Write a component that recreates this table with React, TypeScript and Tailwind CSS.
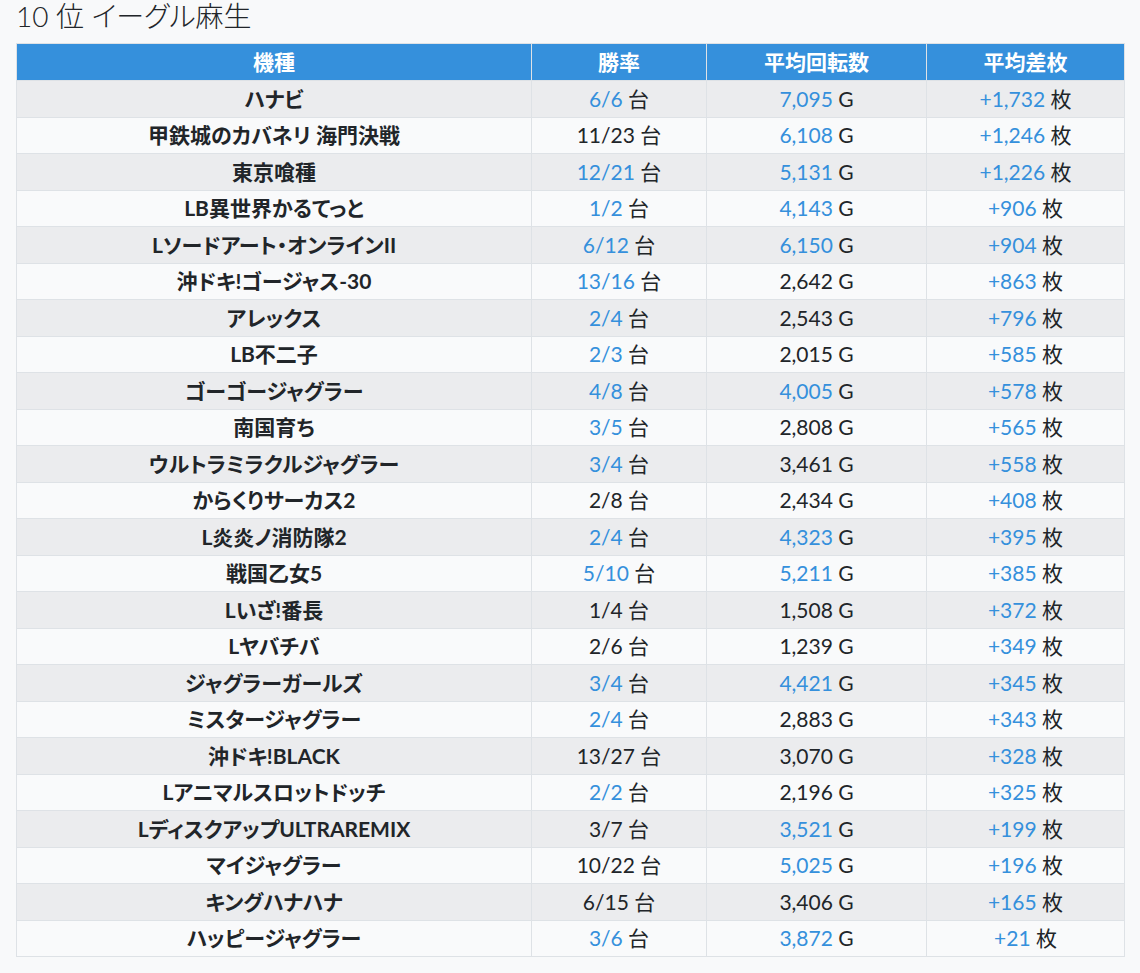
import React from "react";

type Row = { name: string; rate: string; rb: boolean; g: string; gb: boolean; d: string };

const rows: Row[] = [
  { name: "ハナビ", rate: "6/6", rb: true, g: "7,095", gb: true, d: "+1,732" },
  { name: "甲鉄城のカバネリ 海門決戦", rate: "11/23", rb: false, g: "6,108", gb: true, d: "+1,246" },
  { name: "東京喰種", rate: "12/21", rb: true, g: "5,131", gb: true, d: "+1,226" },
  { name: "LB異世界かるてっと", rate: "1/2", rb: true, g: "4,143", gb: true, d: "+906" },
  { name: "Lソードアート・オンラインII", rate: "6/12", rb: true, g: "6,150", gb: true, d: "+904" },
  { name: "沖ドキ!ゴージャス-30", rate: "13/16", rb: true, g: "2,642", gb: false, d: "+863" },
  { name: "アレックス", rate: "2/4", rb: true, g: "2,543", gb: false, d: "+796" },
  { name: "LB不二子", rate: "2/3", rb: true, g: "2,015", gb: false, d: "+585" },
  { name: "ゴーゴージャグラー", rate: "4/8", rb: true, g: "4,005", gb: true, d: "+578" },
  { name: "南国育ち", rate: "3/5", rb: true, g: "2,808", gb: false, d: "+565" },
  { name: "ウルトラミラクルジャグラー", rate: "3/4", rb: true, g: "3,461", gb: false, d: "+558" },
  { name: "からくりサーカス2", rate: "2/8", rb: false, g: "2,434", gb: false, d: "+408" },
  { name: "L炎炎ノ消防隊2", rate: "2/4", rb: true, g: "4,323", gb: true, d: "+395" },
  { name: "戦国乙女5", rate: "5/10", rb: true, g: "5,211", gb: true, d: "+385" },
  { name: "Lいざ!番長", rate: "1/4", rb: false, g: "1,508", gb: false, d: "+372" },
  { name: "Lヤバチバ", rate: "2/6", rb: false, g: "1,239", gb: false, d: "+349" },
  { name: "ジャグラーガールズ", rate: "3/4", rb: true, g: "4,421", gb: true, d: "+345" },
  { name: "ミスタージャグラー", rate: "2/4", rb: true, g: "2,883", gb: false, d: "+343" },
  { name: "沖ドキ!BLACK", rate: "13/27", rb: false, g: "3,070", gb: false, d: "+328" },
  { name: "Lアニマルスロットドッチ", rate: "2/2", rb: true, g: "2,196", gb: false, d: "+325" },
  { name: "LディスクアップULTRAREMIX", rate: "3/7", rb: false, g: "3,521", gb: true, d: "+199" },
  { name: "マイジャグラー", rate: "10/22", rb: false, g: "5,025", gb: true, d: "+196" },
  { name: "キングハナハナ", rate: "6/15", rb: false, g: "3,406", gb: false, d: "+165" },
  { name: "ハッピージャグラー", rate: "3/6", rb: true, g: "3,872", gb: true, d: "+21" },
];

const font = { fontFamily: 'Lato, "Noto Sans CJK JP", sans-serif' };

export default function App() {
  return (
    <div className="min-h-[973px] bg-[#f8f9fa] px-4 text-[#212529] [font-feature-settings:'palt']" style={font}>
      <h1 className="h-[43px] text-[28px] font-light leading-[32px] pt-0">10 位 イーグル麻生</h1>
      <table className="w-[1108px] border-collapse table-fixed text-[21px]">
        <colgroup>
          <col className="w-[515px]" />
          <col className="w-[175px]" />
          <col className="w-[220px]" />
          <col className="w-[198px]" />
        </colgroup>
        <thead>
          <tr className="h-[37px] bg-[#3590dc] text-white">
            <th className="border border-[#dee2e6] border-b-0 font-bold text-[21px] p-0">機種</th>
            <th className="border border-[#dee2e6] border-b-0 font-bold text-[21px] p-0">勝率</th>
            <th className="border border-[#dee2e6] border-b-0 font-bold text-[21px] p-0">平均回転数</th>
            <th className="border border-[#dee2e6] border-b-0 font-bold text-[21px] p-0">平均差枚</th>
          </tr>
        </thead>
        <tbody>
          {rows.map((r, i) => (
            <tr key={i} className={(i % 2 === 0 ? "bg-[#ebecee]" : "bg-[#f9fafb]") + " h-[36.5px]"}>
              <td className="border border-[#dee2e6] p-0 text-center font-bold leading-[30px]">{r.name}</td>
              <td className="border border-[#dee2e6] p-0 text-center leading-[30px]">
                <span className={r.rb ? "text-[#3590dc]" : ""}>{r.rate}</span> 台
              </td>
              <td className="border border-[#dee2e6] p-0 text-center leading-[30px]">
                <span className={r.gb ? "text-[#3590dc]" : ""}>{r.g}</span> G
              </td>
              <td className="border border-[#dee2e6] p-0 text-center leading-[30px]">
                <span className="text-[#3590dc]">{r.d}</span> 枚
              </td>
            </tr>
          ))}
        </tbody>
      </table>
    </div>
  );
}
